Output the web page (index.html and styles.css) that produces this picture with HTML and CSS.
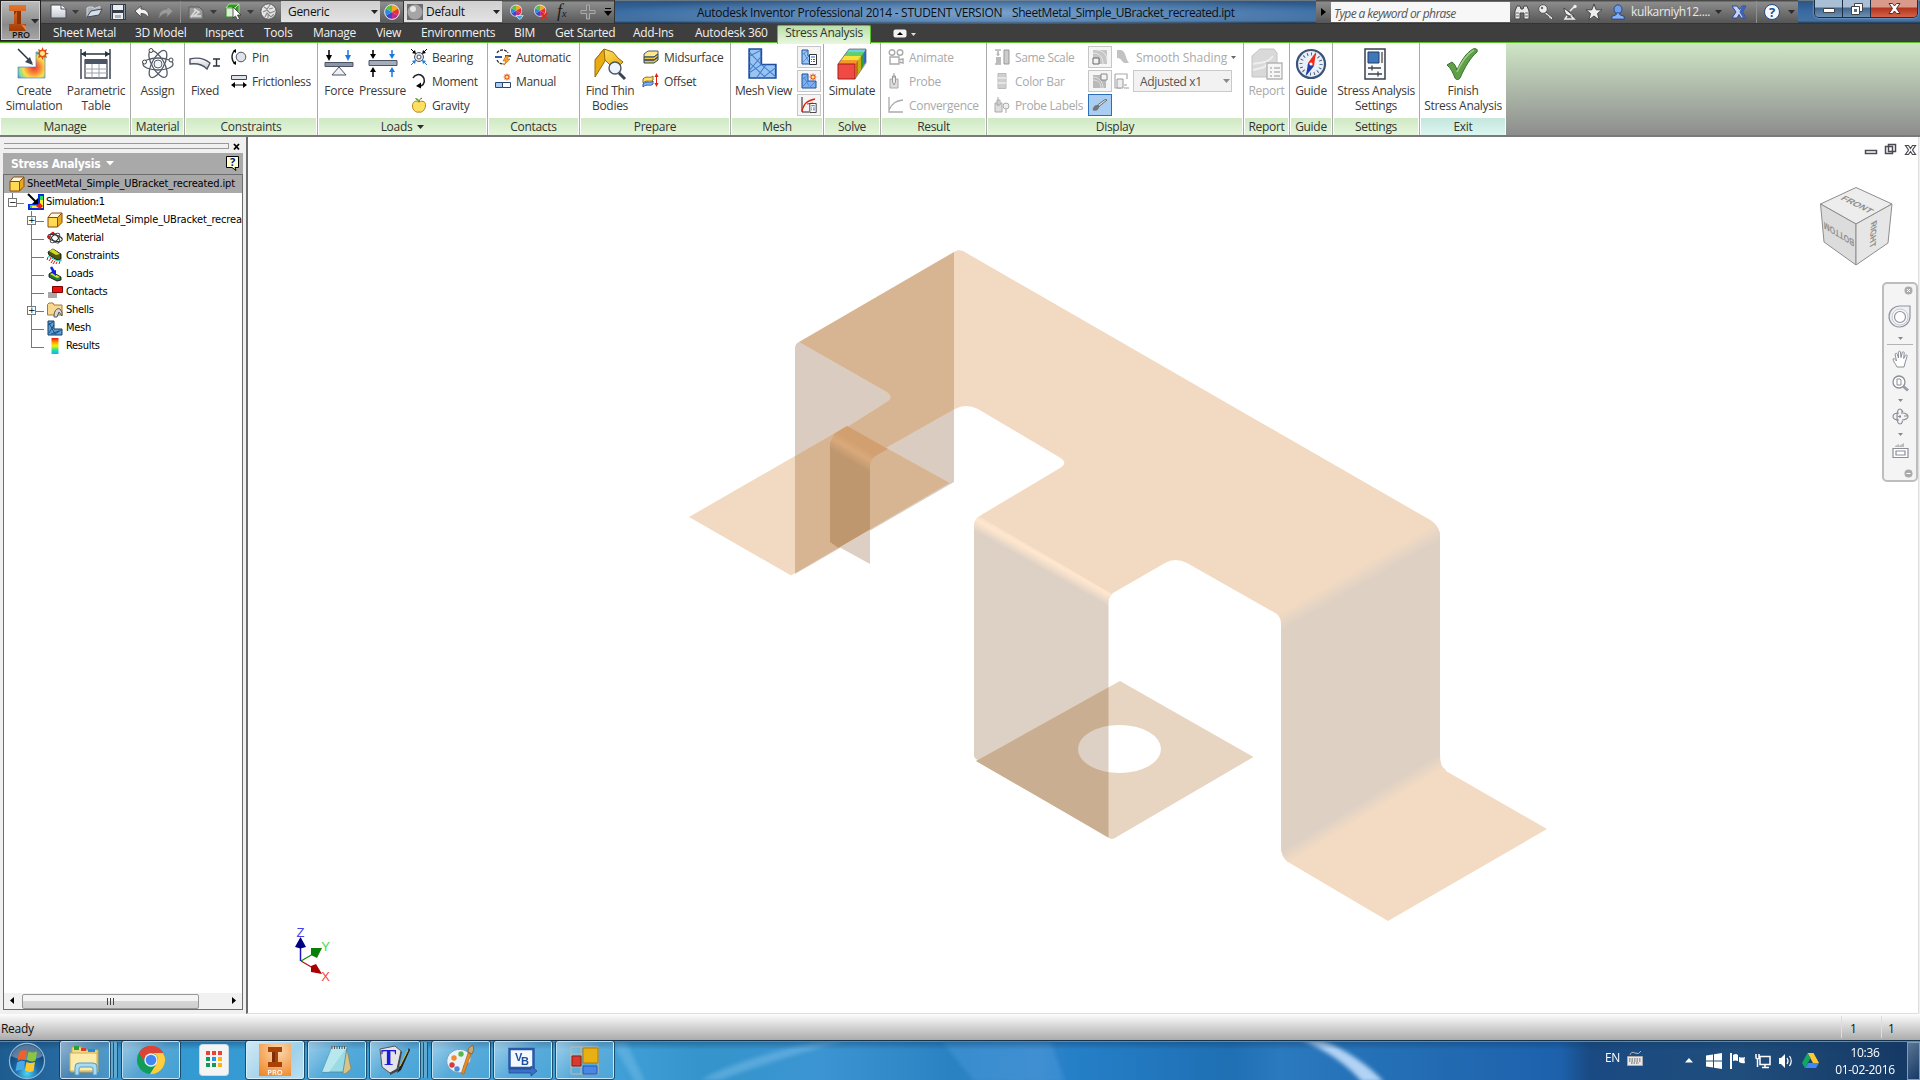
FILE: index.html
```html
<!DOCTYPE html>
<html lang="en">
<head>
<meta charset="utf-8">
<title>Autodesk Inventor Professional 2014</title>
<link rel="stylesheet" href="styles.css">
</head>
<body>
<svg class="defs" width="0" height="0">
  <defs>
    <linearGradient id="gYellow" x1="0" y1="0" x2="1" y2="1"><stop offset="0" stop-color="#ffe97a"/><stop offset="1" stop-color="#e8a800"/></linearGradient>
    <linearGradient id="gGrey" x1="0" y1="0" x2="0" y2="1"><stop offset="0" stop-color="#ffffff"/><stop offset="1" stop-color="#c3c8d0"/></linearGradient>
    <radialGradient id="gHeat" cx=".6" cy=".6" r=".75"><stop offset="0" stop-color="#f03a2a"/><stop offset=".3" stop-color="#f8873a"/><stop offset=".55" stop-color="#f7e04a"/><stop offset=".8" stop-color="#6fd8b0"/><stop offset="1" stop-color="#2f7fe0"/></radialGradient>
    <linearGradient id="gRain" x1="0" y1="0" x2="0" y2="1"><stop offset="0" stop-color="#f01010"/><stop offset=".3" stop-color="#ffb000"/><stop offset=".5" stop-color="#f6f000"/><stop offset=".75" stop-color="#20e0a0"/><stop offset="1" stop-color="#10b0ff"/></linearGradient>
    <linearGradient id="gOrange" x1="0" y1="0" x2="0" y2="1"><stop offset="0" stop-color="#e8762a"/><stop offset="1" stop-color="#a23c06"/></linearGradient>
    <symbol id="wheel" viewBox="0 0 18 18"><circle cx="9" cy="9" r="8.5" fill="#eee"/><path d="M9 9V1A8 8 0 0 1 16 5z" fill="#f5a623"/><path d="M9 9l7-4a8 8 0 0 1 0 8z" fill="#e63228"/><path d="M9 9l7 4a8 8 0 0 1-7 4z" fill="#c02a8a"/><path d="M9 9v8a8 8 0 0 1-7-4z" fill="#4a40c8"/><path d="M9 9l-7 4a8 8 0 0 1 0-8z" fill="#2a8ae0"/><path d="M9 9L2 5a8 8 0 0 1 7-4z" fill="#5cbf3a"/><circle cx="9" cy="9" r="8.3" fill="none" stroke="#d8dde6"/></symbol>
    <symbol id="spark" viewBox="0 0 12 12"><path d="M6 0l1.2 3 3-1.2L9 5l3 1-3 1.2 1.2 3L7.200 9 6 12 4.800 9l-3 1.200L3 7.200 0 6l3-1-1.200-3.200L4.800 3z" fill="#e04a10"/><circle cx="6" cy="6" r="2.300" fill="#ffe88a"/></symbol>
    <symbol id="meshL" viewBox="0 0 24 30" preserveAspectRatio="none"><path d="M1 1h10v15h12v13H1z" fill="#9cc4f2" stroke="#1c4f9c" stroke-width="1.500"/><path d="M1 8l10-6M1 4l10 12M1 22L11 8M1 14l14 15M7 29l8-13M12 29l11-10M11 16l12 12M1 24l10-8" stroke="#3f7fce" fill="none" stroke-width=".9"/></symbol>
    <symbol id="boxY" viewBox="0 0 16 16"><path d="M1 5.500h9.500V15H1z" fill="#ffdb55" stroke="#8a4a08"/><path d="M1 5.500L4.500 1H15l-4.500 4.500z" fill="#fff6d8" stroke="#8a4a08"/><path d="M10.500 5.500L15 1v9.500L10.500 15z" fill="#e6a91a" stroke="#8a4a08"/></symbol>
    <symbol id="calc" viewBox="0 0 8 11"><path d="M.5.5h7v10h-7z" fill="#fff" stroke="#333"/><path d="M2 3h4M2 5.500h1m1 0h2M2 7.500h1m1 0h2" stroke="#2a62b8" fill="none"/></symbol>
    <symbol id="tri" viewBox="0 0 7 4"><path d="M0 0h7L3.500 4z"/></symbol>
  </defs>
</svg>

<header class="titlebar">
  <div class="qat">
    <svg class="i w17 m-new" viewBox="0 0 17 15"><path d="M1 1h10l5 4v9H1z" fill="url(#gGrey)" stroke="#444a55"/><path d="M11 1v4h5" fill="#fff" stroke="#444a55"/></svg>
    <svg class="i tri dk m-a1"><use href="#tri"/></svg>
    <svg class="i w17 m-open" viewBox="0 0 17 15"><path d="M1 13V4l2-1h4l1 1.500 6-2v4" fill="#aab2bd" stroke="#d0d6dd"/><path d="M1 13l4-6 11-2-3 6z" fill="#d9dfe6" stroke="#444a55"/></svg>
    <svg class="i w16 m-save" viewBox="0 0 16 16"><path d="M0 0h16v16H0z" fill="#343b47"/><path d="M3 1h10v5H3zM3 9h10v6H3z" fill="#e9ecf0"/><path d="M1 1h1v14H1zM14 1h1v14h-1z" fill="#8b95a5"/><path d="M5 11h6v3H5z" fill="#a7afbb"/></svg>
    <svg class="i w16 m-undo" viewBox="0 0 16 14"><path d="M1 6l6-5v3c5 0 8 3 8 9-2-3-4-4.500-8-4.500V12z" fill="#f2f4f6" stroke="#555"/></svg>
    <svg class="i w16 m-redo" viewBox="0 0 16 14"><path d="M15 6L9 1v3c-5 0-8 3-8 9 2-3 4-4.500 8-4.500V12z" fill="#9b9b9b" stroke="#7a7a7a"/></svg>
    <i class="vsep m-s1"></i>
    <svg class="i w16 m-sk" viewBox="0 0 16 16"><path d="M1 3h10l4 4v8H1z" fill="#9a9a9a" stroke="#5f5f5f"/><path d="M3 13l5-7M6 5l5 3-5 4h7" stroke="#ddd" fill="none" stroke-width="1.500"/></svg>
    <svg class="i tri dk m-a2"><use href="#tri"/></svg>
    <svg class="i w17 m-cube" viewBox="0 0 17 17"><path d="M1 5h9v9H1z" fill="#dcefd6" stroke="#2f8a1d"/><path d="M1 5l3-4h10l-4 4zM10 5l4-4v9l-4 4z" fill="#2f9a1d" stroke="#d8f0d0" stroke-width=".7"/><path d="M8 4v11l2.500-2 2 4 2-1-2-4H16z" fill="#fff" stroke="#333" stroke-width=".8"/></svg>
    <svg class="i tri dk m-a3"><use href="#tri"/></svg>
    <svg class="i w17 m-ball" viewBox="0 0 17 17"><circle cx="8.500" cy="8.500" r="7.700" fill="#e6e6e6" stroke="#555"/><path d="M4 4l3 2 3-4M3 9l4-2 3 3 5-2M5 14l2-4 4 4 3-3M9 6l4-1M8 12v3" stroke="#8c8c8c" fill="none" stroke-width="1.200"/></svg>
    <div class="combo c1">Generic<svg class="tri dk"><use href="#tri"/></svg></div>
    <svg class="i w16 m-w1"><use href="#wheel"/></svg>
    <i class="vsep dark m-s2"></i>
    <div class="combo c2"><svg class="w16" viewBox="0 0 16 16"><path d="M0 0h16v16H0z" fill="#6d6d6d"/><circle cx="8" cy="8" r="7.500" fill="#a5a5a5"/><circle cx="6" cy="5" r="3" fill="#e6e6e6"/></svg>Default<svg class="tri dk"><use href="#tri"/></svg></div>
    <svg class="i w16 m-w2" viewBox="0 0 16 18"><use href="#wheel" width="14" height="15"/><path d="M7 13h8l-3 4h-2z" fill="#3aa0e8" stroke="#fff" stroke-width=".7"/></svg>
    <svg class="i w16 m-w3" viewBox="0 0 16 18"><use href="#wheel" width="14" height="15"/><path d="M8 10l7 7m0-7l-7 7" stroke="#e02818" stroke-width="2.200"/></svg>
    <span class="fx">f<small>x</small></span>
    <svg class="i w16 m-plus" viewBox="0 0 16 16"><path d="M6.500 1h3v5.500H15v3H9.500V15h-3V9.500H1v-3h5.500z" fill="#777" stroke="#aaa"/></svg>
    <svg class="i m-end" width="8" height="8" viewBox="0 0 8 8"><path d="M1 0h6v1H1zM0 3h8L4 8z"/></svg>
  </div>
  <div class="caption"><span class="cap1">Autodesk Inventor Professional 2014 - STUDENT VERSION</span><span class="cap2">SheetMetal_Simple_UBracket_recreated.ipt</span></div>
  <div class="info">
    <svg width="15" height="22" viewBox="0 0 15 22"><path d="M5 7l5 4-5 4z"/></svg>
    <div class="search">Type a keyword or phrase</div>
    <svg class="i w16 m-i1" viewBox="0 0 16 16"><path d="M1 15V7l2-5h3l1 3h2l1-3h3l2 5v8h-5V9H6v6z" fill="#e8e8e8" stroke="#444"/><path d="M2 9h3m6 0h3M2 12h3m6 0h3" stroke="#666"/></svg>
    <svg class="i w16 m-i2" viewBox="0 0 16 16"><path d="M8 8l7 6-1.500 1.500L11 14l-1-2-2-1-2-3" fill="#e8e8e8" stroke="#555"/><circle cx="5" cy="5" r="4.300" fill="#ededed" stroke="#555"/><circle cx="4" cy="4" r="1.200" fill="#666"/></svg>
    <svg class="i w16 m-i2" viewBox="0 0 16 16"><path d="M2 4c0 6 4 9 10 8z" fill="#eee" stroke="#444"/><path d="M5 12l-2 3h9l-3-3M8 7l5-5" stroke="#eee" stroke-width="1.500" fill="none"/><circle cx="13" cy="2.500" r="1.700" fill="#eee"/></svg>
    <svg class="i w16 m-i2" viewBox="0 0 16 16"><path d="M8 0l2.200 5.800H16l-4.500 3.700L13.200 16 8 12l-5.200 4 1.700-6.500L0 5.800h5.800z" fill="#eee" stroke="#444"/></svg>
    <svg class="i w16 m-i2" viewBox="0 0 16 18"><ellipse cx="8" cy="6" rx="4.500" ry="5" fill="#6f9fe8" stroke="#1d3f88"/><path d="M1 17v-3l5-2v-2h4v2l5 2v3z" fill="#86b0f0" stroke="#1d3f88"/></svg>
    <span class="user">kulkarniyh12....</span>
    <svg class="i tri dk m-i3"><use href="#tri"/></svg>
    <svg class="i w16 m-i4" viewBox="0 0 16 16"><path d="M1 2h5l2.500 3.500L11 2h4l-3.500 6L15 14h-5l-2-3.500L6 14H1l4-6z" fill="#c8d4f4" stroke="#274a9c"/><path d="M11 2h4l-3.500 6L15 14h-3L8.500 8z" fill="#3d62b8"/></svg>
    <i class="vsep m-i5"></i>
    <svg class="i w16 m-i6" viewBox="0 0 16 16"><circle cx="8" cy="8" r="7.500" fill="#f5f8fd" stroke="#234a86"/><text x="8" y="12.500" text-anchor="middle" class="q">?</text></svg>
    <svg class="i tri dk m-i7"><use href="#tri"/></svg>
  </div>
  <div class="winbtns">
    <span class="wb"><svg width="12" height="6" viewBox="0 0 12 6"><path d="M.5.5h11v4H.5z" fill="#fff" stroke="#444"/></svg></span>
    <span class="wb"><svg width="12" height="12" viewBox="0 0 12 12"><path d="M3.500.5h8v8h-8z" fill="#fff" stroke="#444"/><path d="M.5 3.500h8v8h-8z" fill="#fff" stroke="#444"/><path d="M3 6h3v3H3z" fill="#4f6f94"/></svg></span>
    <span class="wb close"><svg width="13" height="11" viewBox="0 0 13 11"><path d="M1 .5h3.500l2 2.500 2-2.500H12L8.500 5.500l3.500 5H8.500l-2-2.500-2 2.500H1l3.500-5z" fill="#fff" stroke="#5a2a28"/></svg></span>
  </div>
</header>

<nav class="tabs">
  <span class="t1">Sheet Metal</span><span class="t2">3D Model</span><span class="t3">Inspect</span><span class="t4">Tools</span><span class="t5">Manage</span><span class="t6">View</span><span class="t7">Environments</span><span class="t8">BIM</span><span class="t9">Get Started</span><span class="t10">Add-Ins</span><span class="t11">Autodesk 360</span><span class="active">Stress Analysis</span>
  <svg class="cycle" width="24" height="10" viewBox="0 0 24 10"><rect x=".5" y=".5" width="13" height="8" rx="2" fill="#f3f3f3"/><path d="M4 6h6L7 3z"/><path d="M18 4h5l-2.500 3z" fill="#ddd"/></svg>
</nav>
<div class="appbtn">
  <svg width="40" height="40" viewBox="0 0 40 40"><path d="M8 4h17v6h-5v13h5v7H8v-7h5V10H8z" fill="url(#gOrange)"/><path d="M13 10h3l-3 4zM16 10h4v13h-4z" fill="#8e3306"/><path d="M20 23l5 2v5z" fill="#e88540"/><path d="M30 18h8l-4 4.500z" fill="#222a38"/></svg>
  <b>PRO</b>
</div>

<main class="ribbon">
  <section class="panel p-manage"><div class="body">
    <div class="big b58 ml5"><svg viewBox="0 0 32 32"><path d="M0 19h18V4h9v26H0z" fill="url(#gHeat)" stroke="#4a70b8" stroke-width=".6"/><path d="M0 1l14 14" stroke="#2a3240" stroke-width="1.500"/><path d="M15 17l-8-3 5-5z" fill="#3a4656"/><use href="#spark" x="18" y="-1" width="13" height="13"/></svg><span>Create<br>Simulation</span></div>
    <div class="big b58 ml5"><svg viewBox="0 0 32 32"><path d="M1 1v30M30 1v30M1 6h29" stroke="#2c3442" stroke-width="1.400"/><path d="M1 6l5-3v6zM30 6l-5-3v6z" fill="#2c3442"/><path d="M5 12h22v18H5z" fill="#fff" stroke="#4a4f5a" stroke-width="1.300"/><path d="M5 11h22v5H5z" fill="#4c5566"/><path d="M5 21h22M5 25h22M12 16v14M19 16v14" stroke="#9aa2ae"/></svg><span>Parametric<br>Table</span></div>
  </div><footer>Manage</footer></section>
  <section class="panel p-material"><div class="body">
    <div class="big b53"><svg viewBox="0 0 32 32"><g fill="none" stroke="#535c6b" stroke-width="1.300"><ellipse cx="16" cy="16" rx="15" ry="6"/><ellipse cx="16" cy="16" rx="15" ry="6" transform="rotate(60 16 16)"/><ellipse cx="16" cy="16" rx="15" ry="6" transform="rotate(118 16 16)"/></g><circle cx="16" cy="16" r="4" fill="#f3f4f6" stroke="#535c6b"/><circle cx="9" cy="2.500" r="2" fill="#fff" stroke="#444"/><circle cx="2.500" cy="14" r="2" fill="#fff" stroke="#444"/><circle cx="29" cy="12" r="2" fill="#fff" stroke="#444"/></svg><span>Assign</span></div>
  </div><footer>Material</footer></section>
  <section class="panel p-constraints"><div class="body">
    <div class="big b40"><svg viewBox="0 0 32 32"><path d="M1 11c8-2 14-1 20 4l-3 6C13 16 8 15 1 16z" fill="url(#gGrey)" stroke="#4b5464" stroke-width="1.400"/><path d="M24 11h7M24 18h7M27.500 11v7" stroke="#2c3442" stroke-width="1.400"/></svg><span>Fixed</span></div>
    <div class="col"><div class="row"><svg class="w16" viewBox="0 0 16 16"><circle cx="10" cy="8" r="4.800" fill="#dfe3e8" stroke="#4b5464"/><path d="M4 1C0 5 0 11 4 15" fill="none" stroke="#222" stroke-width="1.400"/><path d="M5 0v4L2 2zM5 16v-4l-3 2z"/></svg>Pin</div>
    <div class="row"><svg class="w16" viewBox="0 0 16 16"><path d="M.5 2.500h15v4H.5z" fill="#dfe3e8" stroke="#3b4454"/><path d="M2 12h12" stroke="#000"/><path d="M0 12l4-3v6zM16 12l-4-3v6z"/></svg><span class="tight">Frictionless</span></div></div>
  </div><footer>Constraints</footer></section>
  <section class="panel p-loads"><div class="body">
    <div class="big b42"><svg viewBox="0 0 32 32"><path d="M2 14.500h28v4H2z" fill="#8b95a5" stroke="#4b5464"/><path d="M16 19l7 8H9z" fill="#eef0f3" stroke="#4b5464"/><path d="M6 2v6" stroke="#000" stroke-width="1.500"/><path d="M3 7h6l-3 6z"/><path d="M25 2v6" stroke="#1a7ae0" stroke-width="1.500"/><path d="M22 7h6l-3 6z" fill="#1a7ae0"/></svg><span>Force</span></div>
    <div class="big b45"><svg viewBox="0 0 32 32"><path d="M2 12.500h28v5H2z" fill="#a5adb9" stroke="#4b5464"/><path d="M6 2v4M6 24v5" stroke="#000" stroke-width="1.500"/><path d="M3 6h6l-3 5zM3 24h6l-3-5z"/><path d="M25 2v4M25 24v5" stroke="#1a7ae0" stroke-width="1.500"/><path d="M22 6h6l-3 5zM22 24h6l-3-5z" fill="#1a7ae0"/></svg><span>Pressure</span></div>
    <div class="col"><div class="row"><svg class="w16" viewBox="0 0 16 16"><circle cx="8" cy="8" r="4.500" fill="#dfe3e8" stroke="#4b5464"/><circle cx="8" cy="8" r="2" fill="#fff" stroke="#4b5464"/><path d="M0 0l4 4M16 0l-4 4" stroke="#000"/><path d="M5 5L1 4l3-3zM11 5l4-1-3-3z"/><path d="M0 16l4-4m12 4l-4-4" stroke="#1a7ae0"/><path d="M5 11l-4 1 3 3zM11 11l4 1-3 3z" fill="#1a7ae0"/></svg>Bearing</div>
    <div class="row"><svg class="w16" viewBox="0 0 16 16"><path d="M2 5a6 6 0 1 1 8 8" fill="none" stroke="#222" stroke-width="1.600"/><path d="M5 13l5-3.500v6z"/></svg>Moment</div>
    <div class="row"><svg class="w16" viewBox="0 0 16 16"><path d="M8 5c4-2 7 0 6.500 4S11 16 8 15c-3 1-6.500-2-6.500-6S4 3 8 5z" fill="#ffdf62" stroke="#b08418"/><path d="M8 5c0-2 1-3 3-4" stroke="#6a4a12" fill="none"/><path d="M8 4C6 4 5 3 4 1c2 0 4 1 4 3z" fill="#5aa02c"/></svg>Gravity</div></div>
  </div><footer>Loads <svg class="tri dk"><use href="#tri"/></svg></footer></section>
  <section class="panel p-contacts"><div class="body">
    <div class="col c0"><div class="row"><svg class="w16" viewBox="0 0 16 16"><path d="M2 4c2-4 9-4 11 0M2 11c2 4 5 4 7 4" fill="none" stroke="#333" stroke-width="1.300" stroke-dasharray="3 1"/><path d="M0 7h7v2H0zM10 6h6v2h-6z" fill="#2a5ba8"/><path d="M11 7l-3 5h3l-2 4 6-6h-3l2-3z" fill="#f4a52a" stroke="#b85a08" stroke-width=".6"/></svg>Automatic</div>
    <div class="row"><svg class="w16" viewBox="0 0 16 16"><path d="M.5 9.500h7v5h-7z" fill="#a9cdf3" stroke="#27466f"/><path d="M7.500 9.500h8v5h-8z" fill="#fff" stroke="#27466f"/><use href="#spark" x="8" y="0" width="8" height="8"/></svg>Manual</div></div>
  </div><footer>Contacts</footer></section>
  <section class="panel p-prepare"><div class="body">
    <div class="big b58"><svg viewBox="0 0 32 32"><path d="M1 12L10 1l9 3 5 6 5 4-8 8-7-7-3-3z" fill="url(#gYellow)" stroke="#9a6a08"/><path d="M1 29V12L10 1l1 12z" fill="#e9aa12" stroke="#9a6a08"/><circle cx="21" cy="20" r="6" fill="#eef4fb" stroke="#4b5464" stroke-width="1.400"/><path d="M25 25l6 6" stroke="#3b4454" stroke-width="3"/></svg><span>Find Thin<br>Bodies</span></div>
    <div class="col c1x"><div class="row"><svg class="w16" viewBox="0 0 16 16"><path d="M1 5l4-3h10v3l-4 3H1zM1 13l4-3h10" fill="#ffe88a" stroke="#4a5a74"/><path d="M1 8h10l4-3v3l-4 3H1zM1 11h10l4-3v3l-4 3H1z" fill="#e8c53c" stroke="#26416c"/></svg>Midsurface</div>
    <div class="row"><svg class="w16" viewBox="0 0 16 16"><path d="M0 6c4-4 7 0 10-3v4C7 10 4 6 0 10z" fill="#ffe06a" stroke="#8a6a10"/><path d="M0 11c4-4 7 0 10-3v3C7 14 4 10 0 14z" fill="#8ab6ee" stroke="#2a5ba8"/><path d="M13.500 2v10" stroke="#e02010"/><path d="M11.500 4h4l-2-4zM11.500 10h4l-2 4z" fill="#e02010"/></svg>Offset</div></div>
  </div><footer>Prepare</footer></section>
  <section class="panel p-mesh"><div class="body">
    <div class="big b64"><svg viewBox="0 0 32 32"><use href="#meshL" x="0" y="0" width="29" height="31"/></svg><span>Mesh View</span></div>
    <div class="tools"><span class="tb"><svg class="w16" viewBox="0 0 16 16"><path d="M1 1h6v6h3v8H1z" fill="#9cc4f2" stroke="#1c4f9c"/><path d="M1 6l5-4M2 13l6-6M3 4l5 9" stroke="#3f7fce" stroke-width=".8"/><use href="#calc" x="8" y="5" width="8" height="11"/></svg></span><span class="tb"><svg class="w16" viewBox="0 0 16 16"><path d="M1 1h6v7h8v7H1z" fill="#7fb0ec" stroke="#1c4f9c"/><path d="M2 6l5-4M2 13l6-6M3 4l5 9M9 14l5-5" stroke="#3f7fce" stroke-width=".8"/><use href="#spark" x="8" y="0" width="8" height="8"/></svg></span><span class="tb"><svg class="w16" viewBox="0 0 16 16"><path d="M1 0v15h7" fill="none" stroke="#222"/><path d="M1 14C3 6 6 4 14 2" fill="none" stroke="#e02010" stroke-width="1.400"/><path d="M6 7l6-1" stroke="#e02010"/><use href="#calc" x="8" y="6" width="8" height="10"/></svg></span></div>
  </div><footer>Mesh</footer></section>
  <section class="panel p-solve"><div class="body">
    <div class="big b56"><svg viewBox="0 0 32 32"><path d="M2 16l11-15h17L19 16z" fill="#6fd0e8"/><path d="M2 16l3-4h17l-3 4z" fill="#f59a2a"/><path d="M5 12l3-4h17l-3 4z" fill="#f6e13a"/><path d="M8 8l3-4h17l-3 4z" fill="#5fd070"/><path d="M2 16h17v15H2z" fill="#f04a44" stroke="#a01c18"/><path d="M19 16l3-4v14l-3 5z" fill="#d06a10"/><path d="M22 12l3-4v14l-3 4z" fill="#c8b010"/><path d="M25 8l3-4v13l-3 5z" fill="#3a9a3a"/><path d="M28 4l2-3v13l-2 3z" fill="#2a70c0"/><path d="M2 16L13 1h17v14L19 31" fill="none" stroke="#5a5a5a" stroke-width=".7"/></svg><span>Simulate</span></div>
  </div><footer>Solve</footer></section>
  <section class="panel p-result off"><div class="body">
    <div class="col c0"><div class="row"><svg class="w16" viewBox="0 0 16 16"><g fill="none" stroke="#aaa" stroke-width="1.400"><circle cx="4" cy="3.500" r="2.800"/><circle cx="12" cy="3.500" r="2.800"/><path d="M2 8h9v3l4-1v4l-4-1v2H2z"/></g></svg>Animate</div>
    <div class="row"><svg class="w16" viewBox="0 0 16 16"><path d="M2 6h8v9H2z" fill="#ddd" stroke="#aaa"/><path d="M6 0v5M4.500 3h3v6L6 12 4.500 9z" fill="#eee" stroke="#999"/></svg>Probe</div>
    <div class="row"><svg class="w16" viewBox="0 0 16 16"><path d="M1 0v15h14M1 13C4 6 8 4 15 3" fill="none" stroke="#aaa" stroke-width="1.300"/></svg>Convergence</div></div>
  </div><footer>Result</footer></section>
  <section class="panel p-display off"><div class="body">
    <div class="col c0 cw"><div class="row"><svg class="w16" viewBox="0 0 16 16"><path d="M10 1h5v14h-5z" fill="#ccc" stroke="#999"/><path d="M1 1h6M1 15h6M4 2v5" stroke="#888"/><path d="M2 8h5v7H2zM2 6l2-3 2 3z" fill="#bbb"/></svg><span class="tight">Same Scale</span></div>
    <div class="row"><svg class="w16" viewBox="0 0 16 16"><path d="M4 .5h8v15H4z" fill="#cfcfcf" stroke="#bbb"/><path d="M4 5h8M4 10h8" stroke="#e4e4e4" stroke-width="2"/></svg>Color Bar</div>
    <div class="row"><svg class="w16" viewBox="0 0 16 16"><path d="M1 6h7v9H1z" fill="#ddd" stroke="#aaa"/><path d="M4 0v9M3 3h3v5H3z" stroke="#aaa" fill="#eee"/><circle cx="12" cy="9" r="3" fill="#eee" stroke="#aaa"/><path d="M12 12v4" stroke="#aaa"/></svg><span class="tight">Probe Labels</span></div></div>
    <div class="tools"><span class="tb"><svg class="w16" viewBox="0 0 16 16"><path d="M1 1h14v14H1z" fill="#c6c6c6"/><path d="M4 1c6 0 11 4 11 11M1 4c8 0 10 6 10 11" stroke="#e8e8e8" fill="none"/><path d="M1 9h6v6H1z" fill="#f2f2f2" stroke="#666"/></svg></span><span class="tb"><svg class="w16" viewBox="0 0 16 16"><path d="M1 2h13v13H1z" fill="#b9b9b9"/><path d="M1 7c6 0 8 4 8 8M1 4c6 0 10 5 10 11" stroke="#e0e0e0" fill="none"/><path d="M9 1h6v6H9z" fill="#f4f4f4" stroke="#888"/></svg></span><span class="tb sel"><svg class="w16" viewBox="0 0 16 16"><path d="M15 3L7 9.500 5.500 8 13 2.500z" fill="#ddd" stroke="#444" stroke-width=".7"/><path d="M1 13c1-5 3-5 6-4-1 4-2 5-6 4z" fill="#777" stroke="#555" stroke-width=".5"/></svg></span></div>
    <div class="shade">
      <div class="srow"><svg width="14" height="16" viewBox="0 0 14 16"><path d="M1 1h4c5 1 4 8 8 13H9C6 14 6 9 1 9z" fill="#c2c2c2"/></svg><span>Smooth Shading</span><svg class="tri small"><use href="#tri"/></svg></div>
      <div class="srow s2"><svg class="w16" viewBox="0 0 16 16"><path d="M1 1h12v5M1 1v14h6" fill="none" stroke="#aaa" stroke-width="1.200"/><path d="M3 6h6v9H3z" fill="#eee" stroke="#999"/><path d="M10 15h5M10 12h3" stroke="#999"/></svg><div class="adj"><span>Adjusted x1</span><svg class="tri dk2"><use href="#tri"/></svg></div></div>
    </div>
  </div><footer>Display</footer></section>
  <section class="panel p-report off"><div class="body">
    <div class="big b45"><svg viewBox="0 0 32 32"><path d="M1 8l8-7h14l3 4v24H1z" fill="#d9d9d9" stroke="#c4c4c4"/><path d="M2 16c8-2 14 0 20-8M2 22c8-2 12-2 14-6" stroke="#eee" fill="none" stroke-width="2"/><path d="M16 15h15v16H16z" fill="#f6f6f6" stroke="#b5b5b5" stroke-width="1.400"/><path d="M19 20h2m2 0h6M19 24h2m2 0h6M19 28h2m2 0h6" stroke="#b5b5b5" stroke-width="1.400"/></svg><span>Report</span></div>
  </div><footer>Report</footer></section>
  <section class="panel p-guide"><div class="body">
    <div class="big b42"><svg viewBox="0 0 32 32"><circle cx="16" cy="16" r="14" fill="#eaf0f8" stroke="#3c5478" stroke-width="2.200"/><circle cx="16" cy="16" r="10" fill="none" stroke="#4d6488" stroke-width="3" stroke-dasharray="1 2.900"/><path d="M21 4l-8 11 6 3z" fill="#ee2a18"/><path d="M11 28l2-13 6 3z" fill="#1f3fa8"/><circle cx="16" cy="16" r="1.500" fill="#fff"/></svg><span>Guide</span></div>
  </div><footer>Guide</footer></section>
  <section class="panel p-settings"><div class="body">
    <div class="big b86"><svg viewBox="0 0 32 32"><path d="M5 1h20v30H5z" fill="#fafafa" stroke="#39414e" stroke-width="1.500"/><path d="M8 4h11v11H8z" fill="#3f78b8" stroke="#203a66"/><path d="M21 4h2v11h-2z" fill="#888"/><path d="M8 20h13M8 26h14M12 17.500v5M18 23.500v5" stroke="#39414e" stroke-width="1.300"/></svg><span>Stress Analysis<br>Settings</span></div>
  </div><footer>Settings</footer></section>
  <section class="panel p-exit"><div class="body">
    <div class="big b86"><svg viewBox="0 0 32 32"><path d="M0 17l5-3c3 2 4 5 5 8C14 13 19 5 26 1c3-1 5 0 4 3-7 6-12 15-17 26-1 2-4 2-5 0C6 25 4 20 0 17z" fill="#5f9f48" stroke="#35702a"/><path d="M10 24C15 13 20 6 27 2" stroke="#9ccb84" fill="none" stroke-width="1.500"/></svg><span>Finish<br>Stress Analysis</span></div>
  </div><footer>Exit</footer></section>
</main>

<div class="work">
  <aside class="browser">
    <div class="grip"><i></i><svg width="8" height="8" viewBox="0 0 8 8"><path d="M1 1l5 5.500m0-5.500L1 6.500" stroke="#000" stroke-width="1.800"/></svg></div>
    <div class="bhead"><b>Stress Analysis</b><svg width="8" height="5" viewBox="0 0 8 5"><path d="M0 0h8L4 4.500z" fill="#fff"/></svg><svg class="bq" width="13" height="15" viewBox="0 0 13 15"><path d="M.5.500h12v11H9l1 3-4-3H.5z" fill="#ffffd0" stroke="#000"/><text x="6.500" y="10" text-anchor="middle" class="bqt">?</text></svg></div>
    <div class="tree">
      <div class="tr root"><svg class="w16"><use href="#boxY"/></svg><span class="long">SheetMetal_Simple_UBracket_recreated.ipt</span></div>
      <div class="tr l1"><i class="ex">−</i><svg class="w16" viewBox="0 0 16 16"><path d="M0 10h10V0h6v16H0z" fill="#0a2ae0"/><path d="M2 11h10V2h3v12H2z" fill="#20e060"/><path d="M4 12h8V6h3v8H4z" fill="#f8f020"/><path d="M8 12l4-3 3 3-3 3z" fill="#f02010"/><path d="M0 0l8 8" stroke="#000" stroke-width="2"/><path d="M10 10H4l6-6z"/></svg><span>Simulation:1</span></div>
      <div class="tr l2"><i class="ex">+</i><svg class="w16"><use href="#boxY"/></svg><span class="long">SheetMetal_Simple_UBracket_recrea</span></div>
      <div class="tr l2"><svg class="w16" viewBox="0 0 16 16"><g fill="none" stroke="#333"><ellipse cx="8" cy="8" rx="7.500" ry="3" transform="rotate(15 8 8)"/><ellipse cx="8" cy="8" rx="6" ry="3" transform="rotate(50 8 8)"/><ellipse cx="8" cy="8" rx="6" ry="3" transform="rotate(-45 8 8)"/></g><circle cx="2" cy="7" r="1.500" fill="#e01010"/><circle cx="6" cy="3" r="1.300" fill="#e01010"/></svg><span>Material</span></div>
      <div class="tr l2"><svg class="w16" viewBox="0 0 16 16"><path d="M1 4l5-3 8 5v5l-4 1-8-5z" fill="#4a5a10" stroke="#000" stroke-width=".8"/><path d="M2 3l4-2 7 5-4 1z" fill="#d8d820"/><path d="M1 8l9 5 5-1" stroke="#20c0c0" fill="none"/><path d="M1 9l-1 3m4-2l-2 3m4-1l-2 3m4-2l-2 3m4-2l-1 2m4-3l-1 3" stroke="#e01010"/></svg><span>Constraints</span></div>
      <div class="tr l2"><svg class="w16" viewBox="0 0 16 16"><path d="M2 8l3-2 9 5v3l-4 1-8-4z" fill="#208040" stroke="#000" stroke-width=".8"/><path d="M3 8l3-1 7 4-3 1z" fill="#e0e030"/><path d="M4 1l3 5" stroke="#1020e0" stroke-width="2.500"/><path d="M9 10L4 6l5-2z" fill="#1020e0"/></svg><span>Loads</span></div>
      <div class="tr l2"><svg class="w16" viewBox="0 0 16 16"><path d="M1 8h9v6H1z" fill="#a8a8a8"/><path d="M5.500 2.500h10v6h-10z" fill="#f01010" stroke="#700"/></svg><span>Contacts</span></div>
      <div class="tr l2"><i class="ex">+</i><svg class="w16" viewBox="0 0 16 16"><path d="M.5 2.500L2 1h4l1 2h8v10H.5z" fill="#f8d890" stroke="#a87830"/><path d="M7 15c0-8 4-9 6-8l2 3v4l-3-4-2 5z" fill="#d8d8d8" stroke="#555"/></svg><span>Shells</span></div>
      <div class="tr l2"><svg class="w16" viewBox="0 0 16 16"><path d="M1 1h6v8h8v6H1z" fill="#5aa0d8" stroke="#123c68"/><path d="M1 5l5-3M2 13l5-8M2 3l6 11M8 14l6-4M4 14l8-3" stroke="#123c68" stroke-width=".8"/></svg><span>Mesh</span></div>
      <div class="tr l2 last"><svg class="w16" viewBox="0 0 16 16"><path d="M4.500 0h7v16h-7z" fill="url(#gRain)"/></svg><span>Results</span></div>
      <div class="hscroll"><svg width="5" height="8" viewBox="0 0 5 8"><path d="M4 0v7L0 3.500z"/></svg><span class="thumb"><i></i><i></i><i></i></span><svg width="5" height="8" viewBox="0 0 5 8"><path d="M1 0v7l4-3.500z"/></svg></div>
    </div>
  </aside>

  <div class="canvas">
    <svg class="model" viewBox="248 137 1671 876" width="1671" height="876">
      <defs>
        <path id="plate" d="M954 252L958 250L963 251L1432 521Q1439 527 1440 534L1281 622Q1281 617 1277 614L1187 563Q1175 557 1165 563L1113 593Q1108.500 597 1108.500 602L974 525Q975 519 982 514.500L1060 468Q1069 463 1059 457L978 409Q966 403 955 409L877 453Q871 457 870 464L830 443Q831 437 836 434L885 403Q896 397 885 391L799 342Z"/>
        <path id="wall" d="M795 347Q796 343 799 342L954 252V482L795 574Z"/>
        <path id="flange" d="M689 517L847 426L950 483Q948 484 946 485L791 575.500Z"/>
        <path id="floor" fill-rule="evenodd" d="M1120 681L1253.500 757L1114 838.500L1111 839L976 761ZM1078 749a41.500 24 0 1 0 83 0a41.500 24 0 1 0-83 0Z"/>
        <clipPath id="cWall"><use href="#wall"/></clipPath>
        <clipPath id="cFlange"><use href="#flange"/></clipPath>
        <clipPath id="cLeft"><path d="M974 500H1108.500V850H974Z"/></clipPath>
        <linearGradient id="bendR" gradientUnits="userSpaceOnUse" x1="1358" y1="568" x2="1366" y2="582"><stop offset="0" stop-color="#f2dac2"/><stop offset="1" stop-color="#ded1c4"/></linearGradient>
        <linearGradient id="bendB" gradientUnits="userSpaceOnUse" x1="1358" y1="803" x2="1366" y2="816"><stop offset="0" stop-color="#ddd0c4"/><stop offset="1" stop-color="#f3dbc3"/></linearGradient>
        <linearGradient id="bendF" gradientUnits="userSpaceOnUse" x1="1049" y1="552" x2="1040" y2="568"><stop offset="0" stop-color="#f2dac2"/><stop offset=".4" stop-color="#ffe7cf"/><stop offset=".6" stop-color="#f5e0cb"/><stop offset="1" stop-color="#ddd0c4"/></linearGradient>
        <linearGradient id="bendT" gradientUnits="userSpaceOnUse" x1="856" y1="444" x2="847" y2="459"><stop offset="0" stop-color="#d2a070"/><stop offset=".4" stop-color="#d9a97b"/><stop offset="1" stop-color="#bf976e"/></linearGradient>
      </defs>
      <use href="#wall" fill="#daccc1"/>
      <path d="M870 463V564L830 542V443Z" fill="#ddcfc4"/>
      <use href="#plate" fill="#f2dac2"/>
      <use href="#flange" fill="#f2dac2"/>
      <g clip-path="url(#cWall)">
        <use href="#plate" fill="#d7b593"/><use href="#flange" fill="#d7b593"/>
        <g clip-path="url(#cFlange)"><path d="M847 425L888 449L877 455Q870 459 870 466V570L830 542V443L834 434Z" fill="url(#bendT)"/></g>
      </g>
      <path d="M974 525Q974 520 979 516L1112 594Q1108.500 597 1108.500 602V838L979 761Q974 758 974 756Z" fill="url(#bendF)"/>
      <use href="#floor" fill="#e7d5c1"/>
      <g clip-path="url(#cLeft)"><use href="#floor" fill="#c9ae91"/></g>
      <path d="M1277 614L1434 523Q1440 529 1440 536V760Q1440 766 1446 770L1288 862Q1281 856 1281 847V624Q1281 618 1277 614Z" fill="url(#bendR)"/>
      <path d="M1281 846L1440 755Q1440 767 1446 771L1547 829L1388 921L1288 862Q1281 857 1281 846Z" fill="url(#bendB)"/>
      <g><path d="M300.500 940v21" stroke="#1818c0" stroke-width="1.500"/><path d="M301 961l12-7" stroke="#109010" stroke-width="1.300"/><path d="M301 961l12 7" stroke="#b01010" stroke-width="1.300"/><path d="M300.500 937l5.500 10-5.500 1.500-5.500-1.500z" fill="#000080"/><path d="M311 948h11l-5 10-6-3z" fill="#088008"/><path d="M311 966l5-2 6 10-11-2z" fill="#a80000"/></g>
      <text x="300.500" y="937" class="ax z">Z</text><text x="325.500" y="951" class="ax y">Y</text><text x="325.500" y="981" class="ax x">X</text>
      <g stroke="#8d8d8d"><path d="M1820.500 204L1856 187.500 1892 204 1856 224z" fill="#ededed"/><path d="M1820.500 204L1856 224V265L1824 242z" fill="#dcdcdc"/><path d="M1856 224L1892 204 1888 243 1856 265z" fill="#e6e6e6"/></g>
      <g class="ctext"><text transform="matrix(.85 .42 -.75 .5 1840 199)">FRONT</text><text transform="matrix(-.82 -.5 -.04 -1 1854 240)" textLength="37" lengthAdjust="spacingAndGlyphs">BOTTOM</text><text transform="matrix(-.05 1 -.85 .5 1871 223)" textLength="26" lengthAdjust="spacingAndGlyphs">RIGHT</text></g>
      <g fill="#fff" stroke="#4a4a52" stroke-width="1.500"><path d="M1865.500 150.500h11v3h-11zM1888.500 144.500h7v7h-7zM1885.500 146.500h7v7h-7z"/><path d="M1905.500 145.500h3l2 3 2-3h3l-3 4.500 3 4.500h-3l-2-3-2 3h-3l3-4.500z" stroke-width="1.200"/></g>
    </svg>
    <div class="navbar">
      <svg class="nx" width="9" height="9" viewBox="0 0 9 9"><circle cx="4.500" cy="4.500" r="4" fill="#aaa"/><path d="M3 3l3 3m0-3L3 6" stroke="#fff"/></svg>
      <svg width="24" height="24" viewBox="0 0 24 24" class="n-wheel"><path d="M12 1h10v11a10.500 10.500 0 1 1-10-11z" fill="#eef0f4" stroke="#8f949c" stroke-width="1.200"/><circle cx="12" cy="12" r="8" fill="#f8f8fa" stroke="#c4c8ce"/><circle cx="12" cy="12" r="5.500" fill="#fff" stroke="#8f949c" stroke-width="1.200"/></svg>
      <svg class="tri nt a"><use href="#tri"/></svg>
      <hr>
      <svg width="17" height="18" viewBox="0 0 17 18" class="n-hand"><path d="M5 17C3 13 1 11 1 9c1-1 2 0 3.500 2L3 4c1-1 1.800-1 2.300.5L6.500 8 6.300 2C7 1 8.300 1 8.500 2L9 7.500 10.300 2.300c1-1 2-.3 1.900.7L11.700 8.500l1.800-3.300c1-.7 2 0 1.600 1L13 13l-1 4z" fill="#fff" stroke="#8a8e96"/></svg>
      <svg width="17" height="17" viewBox="0 0 17 17" class="n-zoom"><circle cx="7" cy="7" r="6" fill="#fff" stroke="#8a8e96" stroke-width="1.300"/><path d="M5 4h3l1 1v5H5z" fill="#fff" stroke="#8a8e96"/><path d="M11.500 11.500l4.500 4" stroke="#9a9ea6" stroke-width="3"/></svg>
      <svg class="tri nt b"><use href="#tri"/></svg>
      <svg width="17" height="17" viewBox="0 0 17 17" class="n-orb"><g fill="none" stroke="#8a8e96" stroke-width="1.200"><path d="M7 12C4 12 1 11 1 8.500S4 5 7 5m4 0c3 0 5 2 5 3.500S14 12 10 12"/><path d="M11 4C10 2 9 1 8 1 6 1 5 4 5 8.500S6 16 8 16s2-1 2.500-3M6 8.500h3M10 2v4M8 7v3M12 8h3"/></g></svg>
      <svg class="tri nt c"><use href="#tri"/></svg>
      <svg width="17" height="17" viewBox="0 0 17 17" class="n-cam"><path d="M1 6.500h15v9H1zM4 9h9v4H4z" fill="#fff" stroke="#8a8e96" stroke-width="1.200"/><path d="M3 4l4-2v2l5-3v4H3z" fill="#bbb"/></svg>
      <svg class="nx ne" width="9" height="9" viewBox="0 0 9 9"><circle cx="4.500" cy="4.500" r="4" fill="#aaa"/><path d="M2.500 4.500h4" stroke="#fff"/></svg>
    </div>
  </div>
</div>

<div class="status"><span>Ready</span><i class="s1">1</i><i class="s2x">1</i></div>

<footer class="taskbar">
  <svg class="glow" viewBox="0 0 1920 39" width="1920" height="39"><defs><linearGradient id="fade" x1="0" y1="0" x2="0" y2="1"><stop offset="0" stop-color="#123c64" stop-opacity=".45"/><stop offset=".22" stop-color="#123c64" stop-opacity="0"/></linearGradient><filter id="bl"><feGaussianBlur stdDeviation="2"/></filter></defs><g filter="url(#bl)"><path d="M700 39Q745 15 830-2H850Q770 20 720 39z" fill="#8cc8f0" opacity=".4"/><path d="M940-2h110l15 43H975z" fill="#5aa8e8" opacity=".3"/><path d="M1300-2h20Q1360 15 1384 41h-22Q1340 15 1300-2z" fill="#b8d8f8" opacity=".95"/><path d="M610-2h15l20 43h-10z" fill="#8cc8f0" opacity=".35"/></g><path d="M0 0h1920v39H0z" fill="url(#fade)"/></svg>
  <svg class="orb" width="38" height="38" viewBox="0 0 38 38"><defs><radialGradient id="orbg" cx=".5" cy=".85" r=".8"><stop offset="0" stop-color="#4fd8f8"/><stop offset=".4" stop-color="#1b6aa8"/><stop offset="1" stop-color="#0e3862"/></radialGradient></defs><circle cx="19" cy="19" r="17.500" fill="url(#orbg)" stroke="#8fb8d8" stroke-width="1.300"/><path d="M3 14a17 17 0 0 1 32 0q-16 8-32 0z" fill="#fff" opacity=".3"/><path d="M11 10q4-3 8-1l-1.500 9q-4-2-8 1z" fill="#f0602a"/><path d="M20.500 9.500q4 2 8.500 0L27.500 18.500q-4 2-8.500-.5z" fill="#8cc63e"/><path d="M9 20.500q4-3 8-1l-1.500 9q-4-2-8 1z" fill="#48a8e8"/><path d="M18.500 20q4 2 8.500 0l-1.500 9q-4 2-8.500-.5z" fill="#fcc82e"/></svg>
  <div class="task k1 stack"><svg width="32" height="32" viewBox="0 0 32 32"><path d="M3 3h9l2 3h15v22H2z" fill="#f3d987" stroke="#c8a648"/><path d="M5 2h5v4H5z" fill="#2aa03a"/><path d="M12 4h5v3h-5z" fill="#e03a2a"/><path d="M19 5h7v3h-7z" fill="#2a88d8"/><path d="M1 9h27v18H1z" fill="#fbecae" stroke="#d0b058"/><path d="M6 31v-8q0-4 4-4h14q4 0 4 4v8h-4v-6q0-2-2-2H12q-2 0-2 2v6z" fill="#a6dcf4" stroke="#5a9cc0"/></svg></div>
  <div class="task k2"><svg width="30" height="30" viewBox="0 0 30 30"><circle cx="15" cy="15" r="14" fill="#0f9d58"/><path d="M27.100 8A14 14 0 0 1 14 29l7-11a7 7 0 0 0-4-10z" fill="#ffcd40"/><path d="M2.900 8A14 14 0 0 1 27.300 8H15a7 7 0 0 0-6.500 9z" fill="#db4437"/><circle cx="15" cy="15" r="6.700" fill="#f1f1f1"/><circle cx="15" cy="15" r="5.300" fill="#4285f4"/></svg></div>
  <div class="task k3 flat"><svg width="30" height="32" viewBox="0 0 30 32"><rect x=".5" y=".5" width="29" height="31" rx="3" fill="#f4f4f4" stroke="#c8dce8"/><path d="M7 7h4v4H7zM13 7h4v4h-4zM19 7h4v4h-4z" fill="#ea4335"/><path d="M7 13h4v4H7zM7 19h4v4H7z" fill="#159957"/><path d="M13 13h4v4h-4z" fill="#2196f3"/><path d="M19 13h4v4h-4zM19 19h4v4h-4z" fill="#fbb50a"/><path d="M13 19h4v4h-4z" fill="#159957"/></svg></div>
  <div class="task k4 on"><svg width="32" height="32" viewBox="0 0 32 32"><defs><radialGradient id="pg" cx=".6" cy=".2" r="1"><stop offset="0" stop-color="#fbd9b0"/><stop offset="1" stop-color="#f0801c"/></radialGradient></defs><path d="M0 0h32v32H0z" fill="url(#pg)"/><path d="M9 3h14v5h-4v10h4v5H9v-5h4V8H9z" fill="#a84208"/><path d="M13 8h3v10h-3z" fill="#7f2d04"/><text x="16" y="30.500" text-anchor="middle" class="pro">PRO</text></svg></div>
  <div class="task k5"><svg width="32" height="32" viewBox="0 0 32 32"><path d="M26 5l4 20-6 5-4-3z" fill="#d8c48a" stroke="#8a7a48" stroke-width=".6"/><path d="M11 3h15l-4 25H1z" fill="#9adbe4" stroke="#4a8a98" stroke-width=".8"/><path d="M11 3h15L8 28H1z" fill="#c5edf2" opacity=".7"/><path d="M11 2v3m2.500-3v3M16 2v3m2.500-3v3M21 2v3m2.500-3v3" stroke="#555"/></svg></div>
  <div class="task k6 stack"><svg width="32" height="32" viewBox="0 0 32 32"><path d="M1 5l15-3 6 5-4 18-7 4-8-6z" fill="#e4e4e8" stroke="#555"/><path d="M18 25l4-18 1 1-4 19-8 4v-2z" fill="#444"/><text x="2" y="21" class="tee">T</text><path d="M30 4L20 24l-2 5 4-3L31 6z" fill="#222"/><path d="M29 6l-8 16" stroke="#e8c040"/></svg></div>
  <div class="task k7"><svg width="32" height="32" viewBox="0 0 32 32"><path d="M2 20C0 10 10 3 19 6c8 3 9 12 3 14-4 1-4 3-3 6 1 4-13 5-17-6z" fill="#e8f2f8" stroke="#7aa0b8"/><circle cx="7" cy="21" r="2.700" fill="#d83a3a"/><circle cx="9" cy="14" r="2.700" fill="#f08a2a"/><circle cx="16" cy="10" r="2.700" fill="#58b84a"/><circle cx="12" cy="25" r="2.700" fill="#4a8ad8"/><path d="M26 10l-7 20q-3 1-2-3l6-18z" fill="#e88a28" stroke="#a85a10" stroke-width=".6"/><path d="M23 8q-1-4 5-7 2 5-1 9z" fill="#c8a878" stroke="#876838"/></svg></div>
  <div class="task k8"><svg width="30" height="32" viewBox="0 0 30 32"><path d="M1.500 5h24v19h-24z" fill="#f4f9ff" stroke="#2a58a8" stroke-width="2.500"/><path d="M1 25h22v-3l6 5-6 5v-3H1z" fill="#3a70c8" stroke="#1d4488" stroke-width=".7"/><text x="7" y="17" class="vb">V</text><text x="13" y="21" class="vb">B</text></svg></div>
  <div class="task k9"><svg width="30" height="32" viewBox="0 0 30 32"><path d="M1 3h27v27H1zM11 3v27M1 10h27M1 23h27" fill="none" stroke="#c8b8a0"/><path d="M13 4h15v15H13z" fill="#e8b010" stroke="#b07a08"/><path d="M2 12h9v10H2z" fill="#d83a30" stroke="#8a1c14"/><path d="M13 22h14v8H13z" fill="#4a88e8" stroke="#2058b0"/></svg></div>
  <div class="tray">
    <span class="en">EN</span>
    <svg class="t-kb" width="16" height="16" viewBox="0 0 16 16"><path d="M.5 6.500h15v9H.5z" fill="#e8e8e8" stroke="#aaa"/><path d="M2 9h12M2 11h12M4 13h8" stroke="#555" stroke-dasharray="1.500 1"/><path d="M3 5q1-4 5-2t6-2" stroke="#b8b8b8" fill="none"/></svg>
    <svg class="t-up" width="8" height="5" viewBox="0 0 8 5"><path d="M0 4.500h8L4 0z" fill="#fff"/></svg>
    <svg class="t-win" width="16" height="16" viewBox="0 0 16 16"><path d="M0 2.500l7-1v6H0zM8 1.300L16 0v7.500H8zM0 8.500h7v6l-7-1zM8 8.500h8V16l-8-1.300z" fill="#fff"/></svg>
    <svg class="t-flag" width="16" height="16" viewBox="0 0 16 16"><path d="M1 0v16" stroke="#fff" stroke-width="2"/><path d="M3 2q3-2 5 0v6q-3-1-5 0zM9 4q3 1 6 0-1 3 0 6-3 1-6-1z" fill="#fff"/></svg>
    <svg class="t-net" width="16" height="16" viewBox="0 0 16 16"><path d="M5 3.500h10v8H5zM7 14.500h7M10 12v2M1 1v4q2 2 3 0V1M2.500 6v8" fill="none" stroke="#fff" stroke-width="1.500"/></svg>
    <svg class="t-vol" width="14" height="16" viewBox="0 0 14 16"><path d="M0 5h2l4-4v14l-4-4H0z" fill="#fff"/><path d="M8 5q2 3 0 6M10.500 3q3.500 5 0 10" fill="none" stroke="#fff" stroke-width="1.200"/></svg>
    <svg class="t-drv" width="17" height="16" viewBox="0 0 17 16"><path d="M5.500 0h6l5.500 10h-6z" fill="#fcc934"/><path d="M5.500 0L0 10l3 5 5.500-10z" fill="#11a861"/><path d="M6 10h11l-3 5H3z" fill="#4285f4"/></svg>
    <div class="clock">10:36<br>01-02-2016</div>
    <i class="peek"></i>
  </div>
</footer>
</body>
</html>
```
FILE: styles.css
```css
* { box-sizing: border-box; }
body { margin: 0; width: 1920px; height: 1080px; overflow: hidden; position: relative; background: #f0f0f0;
  font: 12px/15px "Open Sans", "Noto Sans", sans-serif; letter-spacing: -.3px; color: #3a3a3a; }
svg { display: block; flex: none; overflow: visible; }
.defs { position: absolute; }
.w16 { width: 16px; height: 16px; }
.w17 { width: 17px; height: 17px; }
.tri { width: 7px; height: 4px; fill: #2c2c2c; }
.i { flex: none; }
.tight { letter-spacing: -.35px; }

/* title bar */
.titlebar { display: flex; height: 24px; background: linear-gradient(#6a7884 0 1px, #2c5683 1px, #396ba4 12px, #45719f 21px, #23384e 23px); }
.qat { width: 615px; height: 23px; padding-left: 50px; display: flex; align-items: center; background: linear-gradient(#4a4a4a 0 1px, #8e8e8e 2px, #5b5b5b 22px); border-right: 1px solid #333; }
.qat .tri { fill: #3a3a3a; }
.m-a1 { margin-left: 5px; } .m-open { margin-left: 7px; } .m-save { margin-left: 7px; }
.m-undo { margin-left: 8px; } .m-redo { margin-left: 8px; }
.vsep { width: 1px; height: 22px; background: #8f8f8f; flex: none; }
.vsep.dark { background: #333; }
.m-s1 { margin-left: 6px; } .m-sk { margin-left: 7px; } .m-a2 { margin-left: 6px; }
.m-cube { margin-left: 8px; } .m-a3 { margin-left: 5px; } .m-ball { margin-left: 6px; }
.combo { height: 21px; display: flex; align-items: center; background: linear-gradient(#cfcfcf, #e3e3e3); color: #111; flex: none; }
.combo > .tri { margin-left: auto; margin-right: 2px; fill: #222 !important; }
.c1 { width: 99px; margin-left: 4px; padding-left: 7px; }
.m-w1 { margin-left: 4px; } .m-s2 { margin-left: 3px; }
.c2 { width: 98px; padding-left: 3px; gap: 3px; }
.m-w2 { margin-left: 7px; } .m-w3 { margin-left: 8px; }
.fx { font: italic 18px/18px "Liberation Serif", serif; color: #1c1c1c; width: 17px; margin-left: 8px; }
.fx small { font-size: 11px; }
.m-plus { margin-left: 6px; } .m-end { margin-left: 8px; }
.caption { width: 701px; padding-left: 82px; display: flex; align-items: center; color: #0b0f14; background: radial-gradient(ellipse 380px 16px at 370px 13px, #7aa3cd, transparent); }
.cap1 { width: 315px; } .cap1, .cap2 { white-space: nowrap; }
.cap2 { letter-spacing: -.43px; }
.info { width: 482px; height: 23px; display: flex; align-items: center; background: linear-gradient(#4a4a4a 0 1px, #8c8c8c 2px, #585858 22px); }
.search { width: 179px; flex: none; height: 20px; background: #f7f7f7; padding: 4px 3px 0; font-style: italic; color: #555; margin-top: 1px; letter-spacing: -.6px; }
.m-i1 { margin-left: 4px; } .m-i2 { margin-left: 8px; }
.user { margin-left: 5px; color: #e9e9e9; width: 78px; white-space: nowrap; letter-spacing: -.35px; }
.m-i3 { margin-left: 6px; } .m-i4 { margin-left: 9px; } .m-i5 { margin-left: 9px; } .m-i6 { margin-left: 7px; } .m-i7 { margin-left: 8px; }
.q { font: bold 13px "Open Sans", sans-serif; fill: #1d4f96; }
.winbtns { display: flex; margin-left: 16px; width: 104px; height: 18px; border: 1px solid #1d2f45; border-top: 0; border-radius: 0 0 5px 5px; overflow: hidden; box-shadow: 0 0 2px #c8dcf0; }
.wb { width: 28px; display: flex; align-items: center; justify-content: center; background: linear-gradient(#a9bfd6 0 7px, #44658a 8px, #6d90b5); border-right: 1px solid #1d2f45; }
.wb:first-child { padding-top: 4px; }
.wb.close { flex: 1; border: 0; background: linear-gradient(#d99a8c 0 7px, #b3321c 8px, #d4634a); }

/* tab row */
.tabs { display: flex; height: 18px; padding-left: 53px; background: #3e3e3e; color: #f0f0f0; line-height: 17px; white-space: nowrap; }
.tabs span { flex: none; }
.t1 { width: 82px; } .t2 { width: 70px; } .t3 { width: 59px; } .t4 { width: 49px; } .t5 { width: 63px; } .t6 { width: 45px; }
.t7 { width: 93px; } .t8 { width: 41px; } .t9 { width: 78px; } .t10 { width: 62px; } .t11 { width: 82px; }
.tabs .active { width: 94px; height: 19px; text-align: center; background: linear-gradient(#b9dfa6, #e9f7e0); color: #333; border: 1px solid #58c12a; border-bottom: 0; margin-top: 1px; line-height: 14px; border-radius: 2px 2px 0 0; z-index: 1; }
.cycle { margin: 5px 0 0 22px; }
.appbtn { position: absolute; left: 0; top: 0; width: 41px; height: 41px; background: linear-gradient(#bdbdbd, #8a8a8a 60%, #a8a8a8); border: 1px solid #222; box-shadow: inset 0 0 0 1px #cfcfcf; }
.appbtn b { position: absolute; left: 11px; top: 28px; font: 600 9px/11px "Open Sans", sans-serif; letter-spacing: -.1px; color: #111; }

/* ribbon */
.ribbon { display: flex; height: 95px; border-top: 1px solid #5ac12a; border-bottom: 2px solid #7a7a7a; background: linear-gradient(#cfe6c6, #8d8d8d 100%); }
.panel { display: flex; flex-direction: column; background: #fff; height: 92px; border-right: 1px solid #a9a9a9; flex: none; white-space: nowrap; }
.p-manage { width: 131px; } .p-material { width: 54px; } .p-constraints { width: 133px; } .p-loads { width: 170px; }
.p-contacts { width: 92px; } .p-prepare { width: 151px; } .p-mesh { width: 93px; } .p-solve { width: 57px; }
.p-result { width: 106px; } .p-display { width: 257px; } .p-report { width: 46px; } .p-guide { width: 43px; }
.p-settings { width: 87px; } .p-exit { width: 86px; border: 0; }
.body { display: flex; height: 75px; }
.panel footer { height: 17px; margin: 0 1px; display: flex; justify-content: center; align-items: center; gap: 5px; background: linear-gradient(#d0e8c4, #e5f7db); color: #333; }
.p-exit footer { background: linear-gradient(#c4e6dd, #dbf7f0); }
.big { display: flex; flex-direction: column; align-items: center; padding-top: 5px; text-align: center; flex: none; }
.big svg { width: 32px; height: 32px; margin-bottom: 3px; }
.b58 { width: 58px; } .b53 { width: 53px; } .b40 { width: 40px; } .b42 { width: 42px; } .b45 { width: 45px; } .b64 { width: 65px; } .b56 { width: 56px; } .b86 { width: 86px; }
.ml5 { margin-left: 5px; }
.p-manage .b58 + .b58 { margin-left: 4px; }
.col { margin: 2px 0 0 6px; }
.col.c0 { margin-left: 7px; } .col.c1x { margin-left: 4px; }
.p-prepare .b58 { margin-left: 1px; }
.row { height: 24px; display: flex; align-items: center; gap: 5px; }
.cw { width: 93px; }
.tools { display: flex; flex-direction: column; gap: 2px; padding: 3px 0 0 1px; }
.tb { width: 24px; height: 22px; border: 1px solid #c6c6c6; background: #f5f5f5; display: flex; align-items: center; justify-content: center; }
.tb.sel { background: #a9cef2; border-color: #2d6fb5; }
.off .body { color: #a9a9a9; }
.shade { padding: 2px 0 0 2px; }
.srow { height: 24px; display: flex; align-items: center; gap: 6px; padding-left: 2px; }
.srow > span { width: 89px; letter-spacing: -.03px; }
.small { width: 5px; height: 3px; fill: #666; }
.dk2 { fill: #8a8a8a; }
.s2 { gap: 3px; padding-left: 0; }
.adj { width: 99px; height: 22px; border: 1px solid #c9c9c9; background: #f2f2f2; display: flex; align-items: center; padding: 0 1px 0 6px; color: #555; justify-content: space-between; letter-spacing: -.35px; }

/* browser pane */
.work { display: flex; height: 877px; }
.browser { width: 246px; padding: 4px 3px 4px 3px; flex: none; font: 11px/18px "DejaVu Sans Condensed", "Noto Sans", sans-serif; letter-spacing: -.3px; color: #000; }
.grip { display: flex; height: 12px; align-items: center; gap: 4px; padding-left: 1px; }
.grip i { width: 225px; height: 6px; border-top: 1px solid #999; border-bottom: 1px solid #999; border-right: 1px solid #999; margin-top: -2px; }
.bhead { width: 240px; height: 21px; background: #a9a9a9; color: #fff; display: flex; align-items: center; gap: 5px; padding-left: 8px; font-size: 12px; }
.bhead b { letter-spacing: -.22px; }
.bq { margin-left: auto; margin-right: 4px; }
.bqt { font: bold 11px "Open Sans", sans-serif; fill: #00107a; }
.tree { width: 240px; height: 836px; border: 1px solid #6d6d6d; background: #fff; overflow: hidden; display: flex; flex-direction: column; }
.tr { height: 18px; display: flex; align-items: center; position: relative; gap: 3px; flex: none; white-space: nowrap; }
.root { background: #a9a9a9; padding-left: 5px; gap: 2px; }
.long { letter-spacing: -.13px; }
.l1 { padding-left: 24px; gap: 2px; }
.l2 { padding-left: 43px; }
.l2 .long { letter-spacing: -.15px; }
.l1 .ex { position: absolute; left: 4px; }
.l2 .ex { position: absolute; left: 23px; }
.l2::before { content: ""; position: absolute; left: 27px; top: 0; width: 12px; height: 10px; border-left: 1px solid #777; border-bottom: 1px solid #777; }
.l2::after { content: ""; position: absolute; left: 27px; top: 9px; height: 9px; border-left: 1px solid #777; }
.l2.last::after { display: none; }
.l1::before { content: ""; position: absolute; left: 8px; top: 0; width: 11px; height: 10px; border-left: 1px solid #777; border-bottom: 1px solid #777; }
.ex { width: 9px; height: 9px; border: 1px solid #777; background: #fff; font: 9px/7px "DejaVu Sans", sans-serif; letter-spacing: 0; text-align: center; z-index: 1; overflow: hidden; }
.hscroll { margin-top: auto; height: 16px; background: #f1f1f1; display: flex; align-items: center; padding: 0 6px; }
.thumb { width: 177px; height: 15px; margin: 0 auto 0 7px; border: 1px solid #979797; border-radius: 2px; background: linear-gradient(#f4f4f4 45%, #d5d5d5 50%, #cfcfcf); display: flex; align-items: center; justify-content: center; gap: 2px; }
.thumb i { width: 1px; height: 7px; background: #444; }

/* canvas */
.canvas { width: 1673px; height: 877px; background: #fff; border-left: 2px solid #6d6d6d; border-right: 1px solid #dedede; border-bottom: 1px solid #dedede; position: relative; overflow: hidden; }
.ax { font: 13px "Liberation Sans", sans-serif; text-anchor: middle; letter-spacing: 0; }
.z { fill: #4343e8; } .y { fill: #3fe03f; } .x { fill: #f04848; }
.ctext { font: bold 10px "Liberation Sans", sans-serif; fill: #8f8f8f; letter-spacing: 0; }
.navbar { position: absolute; left: 1634px; top: 145px; width: 36px; height: 200px; border: 2px solid #bdbdbd; border-radius: 5px; background: #f4f4f4; display: flex; flex-direction: column; align-items: center; }
.nx { align-self: flex-end; margin: 2px 3px 0 0; }
.ne { margin-top: 10px; }
.n-wheel { margin-top: 10px; }
.nt { width: 5px; height: 3px; fill: #8a8a8a; }
.nt.a { margin-top: 8px; }
.navbar hr { width: 26px; margin: 4px 0 0; border: 0; border-top: 1px solid #b5b5b5; }
.n-hand { margin-top: 5px; } .n-zoom { margin-top: 7px; }
.nt.b { margin-top: 7px; } .n-orb { margin-top: 6px; } .nt.c { margin-top: 8px; } .n-cam { margin-top: 6px; }

/* status and taskbar */
.status { height: 26px; display: flex; background: linear-gradient(#fdfdfd, #ababab); color: #111; line-height: 29px; padding-left: 1px; }
.status i { font-style: normal; border-left: 1px solid #ddd; height: 22px; margin-top: 2px; line-height: 25px; padding-left: 8px; width: 40px; }
.status .s1 { margin-left: auto; } .status .s2x { width: 39px; padding-left: 6px; }
.taskbar { height: 40px; display: flex; align-items: flex-start; position: relative; border-top: 1px solid #17344e; box-shadow: inset 0 1px #9cc3dc;
  background: linear-gradient(90deg, #1d5c8f 0, #25689f 55px, #3b93c9 120px, #349ad2 190px, #3f9fd6 620px, #3494cb 700px, #3c95d2 820px, #2a82c2 950px, #3584c8 1040px, #2580c8 1070px, #1f6fb3 1230px, #2b79bf 1280px, #2470b6 1380px, #1d61ac 1560px, #1a4a82 1590px, #1f4d7c 1740px, #163a66 1900px); }
.glow { position: absolute; left: 0; top: 0; overflow: hidden; }
.orb { margin: 1px 0 0 8px; position: relative; }
.task { height: 38px; margin-top: 0; border: 1px solid rgba(230,245,255,.75); outline: 1px solid rgba(20,50,75,.75); border-radius: 2px; background: linear-gradient(135deg, rgba(255,255,255,.5), rgba(255,255,255,.15) 50%, rgba(255,255,255,.08)); display: flex; align-items: center; justify-content: center; position: relative; flex: none; }
.k1 { width: 50px; margin-left: 14px; } .k2 { width: 58px; margin-left: 12px; } .k3 { width: 30px; margin-left: 19px; } .k4 { width: 58px; margin-left: 17px; }
.k5 { width: 58px; margin-left: 4px; } .k6 { width: 50px; margin-left: 4px; } .k7 { width: 58px; margin-left: 12px; } .k8 { width: 58px; margin-left: 4px; } .k9 { width: 58px; margin-left: 4px; }
.task.flat { border: 0; outline: 0; background: none; }
.task.on { background: linear-gradient(135deg, #cfe9f5, #9fd0ea 60%, #b9e0f2); }
.stack { box-shadow: 4px 0 0 -1px #62a9cf, 5px 0 0 -1px #1e5276, 8px 0 0 -1px #62a9cf, 9px 0 0 -1px #1e5276; }
.pro { font: 600 7.500px "Open Sans", sans-serif; fill: #fff; letter-spacing: 0; }
.tee { font: bold 23px "Liberation Serif", serif; fill: #1a1ad8; letter-spacing: 0; }
.vb { font: bold 11px "Liberation Sans", sans-serif; fill: #1d4fa0; letter-spacing: 0; }
.tray { margin-left: auto; width: 315px; height: 39px; display: flex; align-items: center; color: #fff; position: relative; }
.en { width: 22px; margin-top: -6px; }
.t-kb { margin-top: -6px; } .t-up { margin-left: 42px; } .t-win { margin-left: 13px; } .t-flag { margin-left: 8px; } .t-net { margin-left: 9px; } .t-vol { margin-left: 8px; } .t-drv { margin-left: 9px; }
.clock { width: 70px; margin-left: 11px; text-align: center; line-height: 17px; white-space: nowrap; }
.peek { width: 13px; height: 38px; margin-left: 7px; border: 1px solid #7f9dba; background: linear-gradient(135deg, rgba(255,255,255,.3), rgba(255,255,255,0)); }
```
